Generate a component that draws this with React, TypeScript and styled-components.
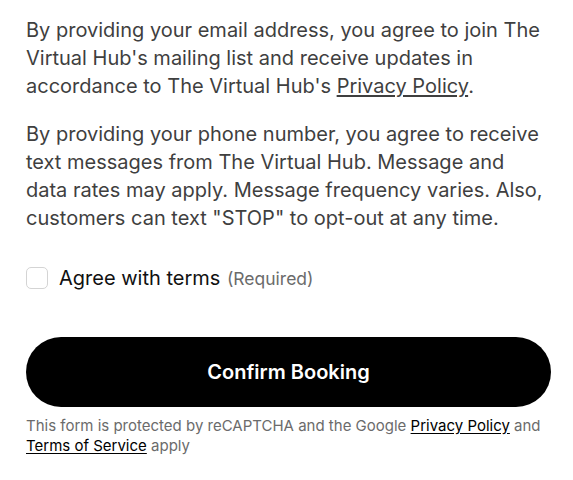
import styled, { createGlobalStyle } from 'styled-components';

const GlobalStyle = createGlobalStyle`
  body {
    margin: 0;
    background: #fff;
    font-family: Inter, "Noto Sans", sans-serif;
  }
`;

const Form = styled.div`
  width: 525px;
  padding: 16px 0 0 26px;
`;

const Notice = styled.p`
  margin: 0 0 20px;
  font-size: 20px;
  line-height: 28px;
  color: #3f3f3f;
`;

const Link = styled.a`
  color: inherit;
  text-decoration: underline;
  text-underline-offset: 2px;
`;

const CheckRow = styled.label`
  display: flex;
  align-items: center;
  gap: 11px;
  margin-top: 32px;
  height: 28px;
`;

const Box = styled.span`
  width: 22px;
  height: 22px;
  box-sizing: border-box;
  border: 1px solid #d4d4d4;
  border-radius: 5px;
  background: #fff;
`;

const LabelText = styled.span`
  font-size: 20px;
  color: #111;
`;

const Hint = styled.span`
  font-size: 17.5px;
  color: #6b6b6b;
  margin-left: 1px;
`;

const ConfirmButton = styled.button`
  display: block;
  width: 525px;
  height: 70px;
  margin-top: 45px;
  border: none;
  border-radius: 35px;
  background: #000;
  color: #fff;
  font-family: Inter, "Noto Sans", sans-serif;
  font-size: 20px;
  font-weight: 600;
  cursor: pointer;
`;

const Recaptcha = styled.p`
  margin: 9px 0 0;
  font-size: 15px;
  line-height: 20px;
  color: #6b6b6b;

  a {
    color: #000;
  }
`;

export default function App() {
  return (
    <>
      <GlobalStyle />
      <Form>
        <Notice>
          By providing your email address, you agree to join The Virtual Hub's mailing list and
          receive updates in accordance to The Virtual Hub's <Link href="#">Privacy Policy</Link>.
        </Notice>
        <Notice>
          By providing your phone number, you agree to receive text messages from The Virtual Hub.
          Message and data rates may apply. Message frequency varies. Also, customers can text
          "STOP" to opt-out at any time.
        </Notice>
        <CheckRow>
          <Box />
          <LabelText>
            Agree with terms <Hint>(Required)</Hint>
          </LabelText>
        </CheckRow>
        <ConfirmButton>Confirm Booking</ConfirmButton>
        <Recaptcha>
          This form is protected by reCAPTCHA and the Google <Link href="#">Privacy Policy</Link> and{' '}
          <Link href="#">Terms of Service</Link> apply
        </Recaptcha>
      </Form>
    </>
  );
}
